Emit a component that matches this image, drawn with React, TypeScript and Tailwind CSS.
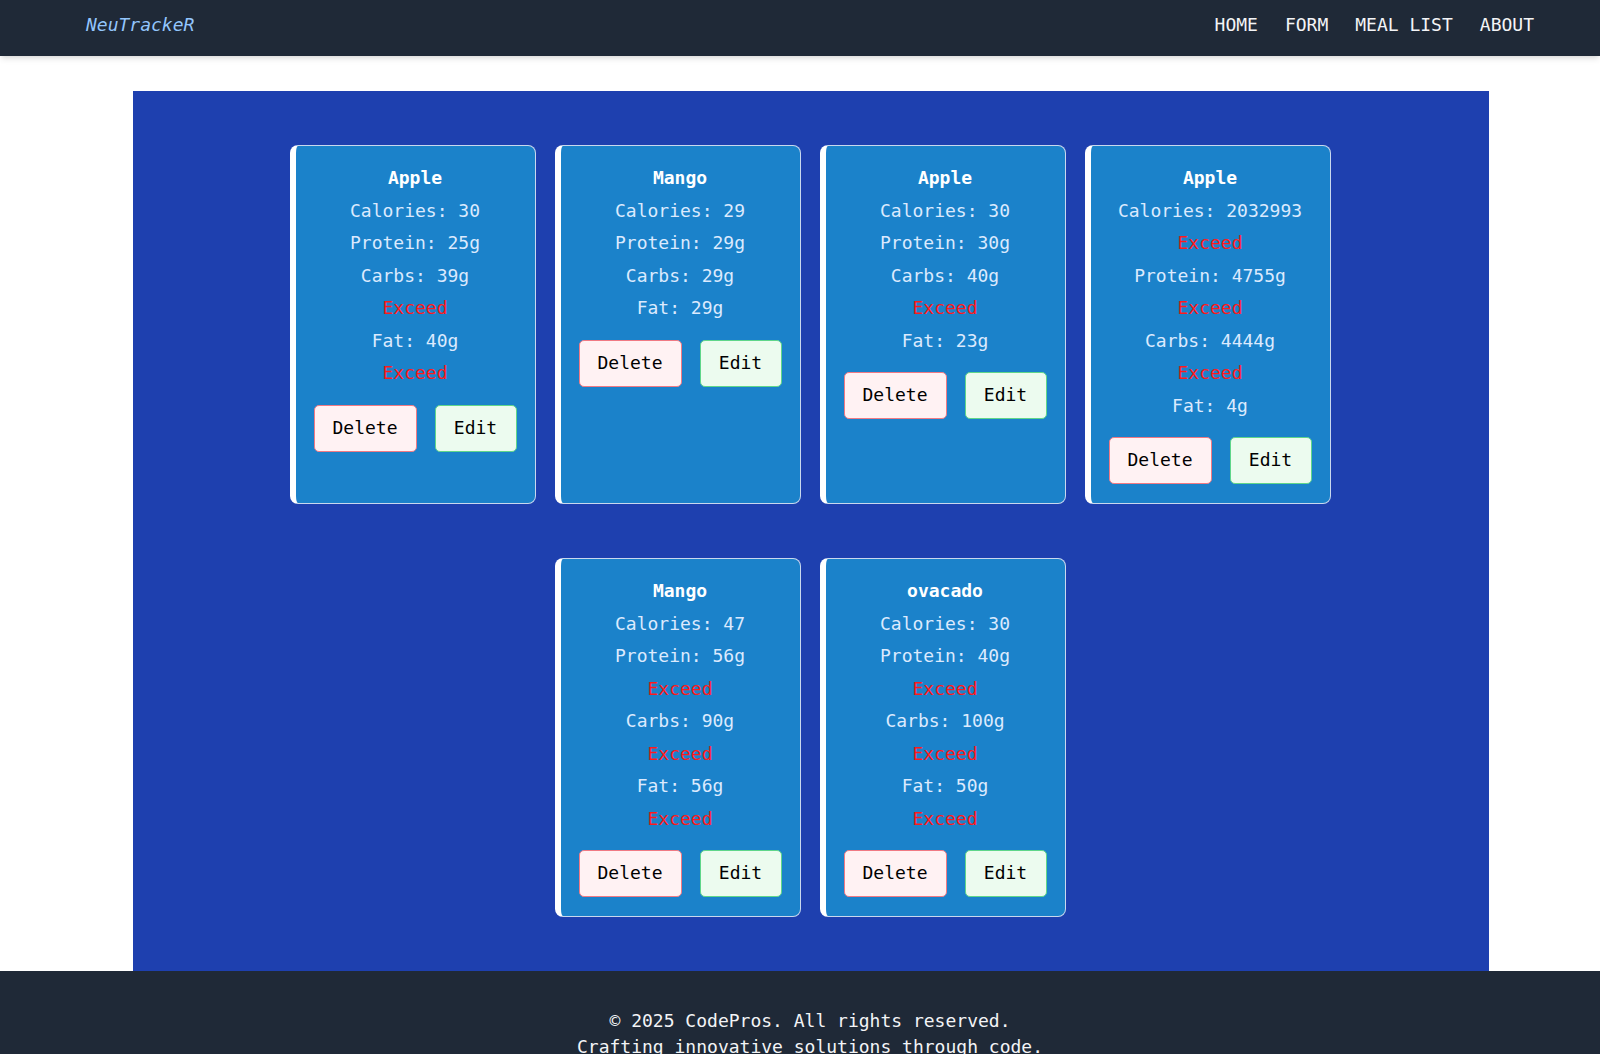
import React from "react";

interface Meal {
  name: string;
  calories: number;
  protein: number;
  carbs: number;
  fat: number;
}

const meals: Meal[] = [
  { name: "Apple", calories: 30, protein: 25, carbs: 39, fat: 40 },
  { name: "Mango", calories: 29, protein: 29, carbs: 29, fat: 29 },
  { name: "Apple", calories: 30, protein: 30, carbs: 40, fat: 23 },
  { name: "Apple", calories: 2032993, protein: 4755, carbs: 4444, fat: 4 },
  { name: "Mango", calories: 47, protein: 56, carbs: 90, fat: 56 },
  { name: "ovacado", calories: 30, protein: 40, carbs: 100, fat: 50 },
];

// limits the list checks each value against
const limits = { calories: 2000, protein: 30, carbs: 30, fat: 30 };

function Exceed() {
  return <p className="text-[#ff1a1a]">Exceed</p>;
}

function MealCard({ meal }: { meal: Meal }) {
  return (
    <div className="w-[246px] rounded-lg border border-[#c9d8ee] border-l-[6px] border-l-white bg-[#1b82ca] pt-[16px] pb-[19px] text-center text-lg leading-[32.5px] text-[#dbeafe]">
      <h3 className="font-bold text-white">{meal.name}</h3>
      <p>Calories: {meal.calories}</p>
      {meal.calories > limits.calories && <Exceed />}
      <p>Protein: {meal.protein}g</p>
      {meal.protein > limits.protein && <Exceed />}
      <p>Carbs: {meal.carbs}g</p>
      {meal.carbs > limits.carbs && <Exceed />}
      <p>Fat: {meal.fat}g</p>
      {meal.fat > limits.fat && <Exceed />}
      <div className="mt-[15px] flex justify-center gap-[18px]">
        <button className="h-[47px] w-[103px] rounded-[5px] border border-[#f07a84] bg-[#fff2f3] text-black">
          Delete
        </button>
        <button className="h-[47px] w-[82px] rounded-[5px] border border-[#5fd68a] bg-[#ecfbef] text-black">
          Edit
        </button>
      </div>
    </div>
  );
}

export default function App() {
  return (
    <div className="min-h-screen bg-white font-['DejaVu_Sans_Mono',monospace]">
      <header className="relative z-10 flex h-14 items-center justify-between bg-[#1f2937] pb-[6px] pl-[86px] pr-[66px] shadow-md">
        <span className="text-lg italic text-[#93c5fd]">NeuTrackeR</span>
        <nav className="flex gap-[27px] text-lg text-gray-100">
          <a href="#">HOME</a>
          <a href="#">FORM</a>
          <a href="#">MEAL LIST</a>
          <a href="#">ABOUT</a>
        </nav>
      </header>

      <main className="ml-[133px] mt-[35px] w-[1356px] bg-[#1e40af] pl-[156px] pr-[158px] pt-[54px] pb-[54px]">
        <div className="flex flex-wrap justify-center gap-x-[19px] gap-y-[54px]">
          {meals.map((m, i) => (
            <MealCard key={i} meal={m} />
          ))}
        </div>
      </main>

      <footer className="bg-[#1f2937] pl-[20px] pt-[37px] pb-6 text-center text-lg leading-[26px] text-gray-100">
        <p>© 2025 CodePros. All rights reserved.</p>
        <p>Crafting innovative solutions through code.</p>
      </footer>
    </div>
  );
}
